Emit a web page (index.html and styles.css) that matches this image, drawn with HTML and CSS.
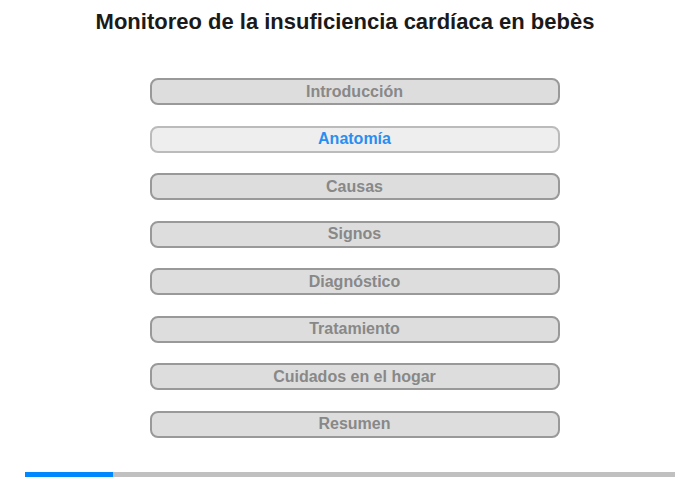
FILE: index.html
```html
<!DOCTYPE html>
<html lang="es">
<head>
<meta charset="UTF-8">
<title>Monitoreo de la insuficiencia cardíaca en bebès</title>
<link rel="stylesheet" href="styles.css">
</head>
<body>
  <div class="page">
    <h1>Monitoreo de la insuficiencia cardíaca en bebès</h1>
    <nav class="menu">
      <button>Introducción</button>
      <button class="active">Anatomía</button>
      <button>Causas</button>
      <button>Signos</button>
      <button>Diagnóstico</button>
      <button>Tratamiento</button>
      <button>Cuidados en el hogar</button>
      <button>Resumen</button>
    </nav>
    <div class="progress"><div class="progress-fill" style="width: 13.5%"></div></div>
  </div>
</body>
</html>
```

FILE: styles.css
```css
html {
  font-family: "Liberation Sans", Arial, sans-serif;
}

body {
  margin: 0;
  background: #fff;
}

.page {
  width: 650px;
  margin: 0 auto;
  padding-top: 9px;
}

h1 {
  margin: 0;
  padding-right: 10px;
  font-size: 22px;
  line-height: 26px;
  font-weight: bold;
  color: #1a1a1a;
  text-align: center;
}

.menu {
  display: flex;
  flex-direction: column;
  align-items: center;
  gap: 20.5px;
  margin-top: 43px;
  padding-left: 9px;
}

.menu button {
  width: 410px;
  height: 27px;
  padding: 0;
  border: 2px solid #999;
  border-radius: 8px;
  background: #ddd;
  color: #888;
  font-family: inherit;
  font-size: 16px;
  font-weight: bold;
}

.menu button.active {
  background: #eee;
  border-color: #bbb;
  color: #2a8ef0;
}

.progress {
  height: 5px;
  margin-top: 34px;
  background: #c0c0c0;
}

.progress-fill {
  height: 100%;
  background: #0088ff;
}
```
